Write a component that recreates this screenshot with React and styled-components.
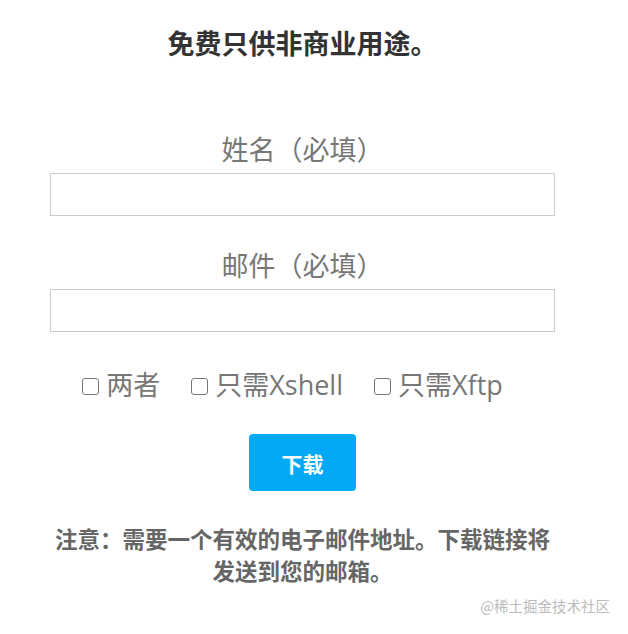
import styled, { createGlobalStyle } from 'styled-components';

const GlobalStyle = createGlobalStyle`
    html, body {
        margin: 0;
        padding: 0;
        background: #fff;
    }
    body {
        font-family: 'Open Sans', 'Noto Sans CJK SC', sans-serif;
    }
`;

const Page = styled.div`
    position: relative;
    width: 628px;
    height: 634px;
    display: flex;
    flex-direction: column;
    align-items: center;
    padding-left: 50px;
    padding-right: 73px;
    box-sizing: border-box;
`;

const Title = styled.h2`
    margin: 28px 0 0;
    font-size: 27px;
    line-height: 32px;
    font-weight: 700;
    color: #333;
    text-align: center;
`;

const Form = styled.form`
    width: 100%;
    margin-top: 72px;
    display: flex;
    flex-direction: column;
    align-items: center;
`;

const Label = styled.label`
    font-size: 27px;
    line-height: 36px;
    color: #777;
    margin-top: ${p => p.$first ? '0' : '32px'};
    margin-bottom: 5px;
`;

const Input = styled.input`
    width: 100%;
    height: 43px;
    box-sizing: border-box;
    border: 1px solid #ccc;
    background: #fff;
    outline: none;
`;

const Options = styled.div`
    display: flex;
    gap: 31px;
    padding-right: 20px;
    margin-top: 35px;
`;

const Option = styled.label`
    display: flex;
    align-items: center;
    gap: 7px;
    font-size: 27px;
    line-height: 36px;
    color: #777;
`;

const Box = styled.span`
    width: 17px;
    height: 17px;
    border: 1.5px solid #777;
    border-radius: 3px;
    box-sizing: border-box;
    margin-top: 3px;
`;

const Button = styled.button`
    margin-top: 31px;
    width: 107px;
    height: 57px;
    border: none;
    border-radius: 4px;
    background: #03a9f4;
    color: #fff;
    font-family: 'Noto Sans CJK SC', sans-serif;
    font-size: 21px;
    font-weight: 700;
`;

const Note = styled.p`
    margin: 33px 0 0;
    width: 505px;
    font-size: 22.5px;
    line-height: 32px;
    font-weight: 700;
    color: #666;
    text-align: center;
`;

const Watermark = styled.span`
    position: absolute;
    right: 18px;
    bottom: 18px;
    font-family: 'Noto Sans CJK SC', sans-serif;
    font-size: 14.5px;
    color: #bbb;
`;

const options = ['两者', '只需Xshell', '只需Xftp'];

const App = () => {
    return (
        <Page>
            <GlobalStyle />
            <Title>免费只供非商业用途。</Title>
            <Form onSubmit={e => e.preventDefault()}>
                <Label $first>姓名（必填）</Label>
                <Input type="text" />
                <Label>邮件（必填）</Label>
                <Input type="email" />
                <Options>
                    {options.map(opt => (
                        <Option key={opt}>
                            <Box />
                            {opt}
                        </Option>
                    ))}
                </Options>
                <Button type="submit">下载</Button>
            </Form>
            <Note>注意：需要一个有效的电子邮件地址。下载链接将发送到您的邮箱。</Note>
            <Watermark>@稀土掘金技术社区</Watermark>
        </Page>
    );
};

export default App;
